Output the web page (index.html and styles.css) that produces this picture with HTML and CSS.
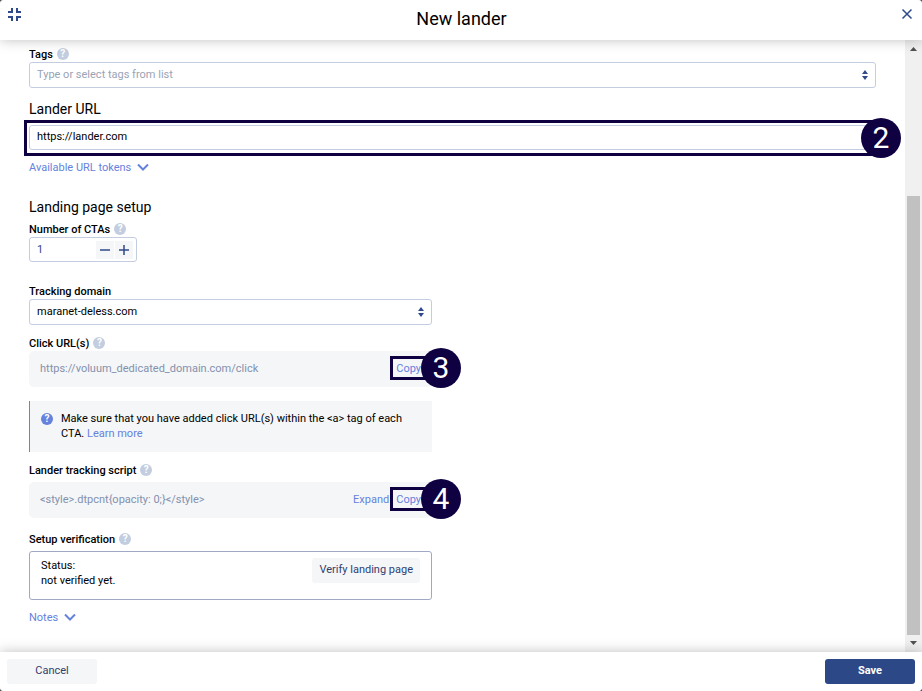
FILE: index.html
```html
<!DOCTYPE html>
<html lang="en">
<head>
    <meta charset="UTF-8">
    <meta name="viewport" content="width=device-width, initial-scale=1.0">
    <title>New lander</title>
    <link rel="stylesheet" href="styles.css">
</head>
<body>
    <div class="dialog">
        <header class="dialog-header">
            <button class="icon-button" type="button" aria-label="Collapse">
                <svg width="14" height="14" viewBox="0 0 14 14"><path d="M0 4H4V0M9 0V4H13M0 9H4V13M13 9H9V13" fill="none" stroke="#2f4a8a" stroke-width="2"/></svg>
            </button>
            <h1>New lander</h1>
            <button class="icon-button" type="button" aria-label="Close">
                <svg width="12" height="12" viewBox="0 0 12 12"><path d="M1.500 1.500L10.500 10.500M10.500 1.500L1.500 10.500" fill="none" stroke="#2f4a8a" stroke-width="1.500"/></svg>
            </button>
        </header>

        <div class="dialog-body">
            <form class="form" id="lander-form">
                <div class="label-row">
                    <label for="tags">Tags</label>
                    <span class="help">?</span>
                </div>
                <div class="field">
                    <input class="control" type="text" id="tags" placeholder="Type or select tags from list">
                    <svg class="arrows" width="6" height="10" viewBox="0 0 6 10"><path d="M0 4L3 0L6 4ZM0 6H6L3 10Z" fill="#2f4a8a"/></svg>
                </div>

                <h2><label for="lander-url">Lander URL</label></h2>
                <div class="field url-field">
                    <input class="control" type="text" id="lander-url" value="https://lander.com">
                    <span class="marker"></span>
                    <span class="step">2</span>
                </div>
                <button class="toggle" type="button">Available URL tokens
                    <svg width="12" height="8" viewBox="0 0 12 8"><path d="M1 1.500L6 6.500L11 1.500" fill="none" stroke="#6582dd" stroke-width="2"/></svg>
                </button>

                <h2 class="setup-title">Landing page setup</h2>
                <div class="label-row">
                    <label for="ctas">Number of CTAs</label>
                    <span class="help">?</span>
                </div>
                <div class="stepper">
                    <input type="text" inputmode="numeric" id="ctas" value="1">
                    <button type="button" aria-label="Decrease">
                        <svg width="10" height="10" viewBox="0 0 10 10"><path d="M0 5H10" stroke="#2f4a8a" stroke-width="1.500"/></svg>
                    </button>
                    <button type="button" aria-label="Increase">
                        <svg width="10" height="10" viewBox="0 0 10 10"><path d="M0 5H10M5 0V10" stroke="#2f4a8a" stroke-width="1.500"/></svg>
                    </button>
                </div>

                <div class="narrow">
                    <div class="label-row domain-label">
                        <label for="domain">Tracking domain</label>
                    </div>
                    <div class="field">
                        <select class="control" id="domain">
                            <option>maranet-deless.com</option>
                        </select>
                        <svg class="arrows" width="6" height="10" viewBox="0 0 6 10"><path d="M0 4L3 0L6 4ZM0 6H6L3 10Z" fill="#2f4a8a"/></svg>
                    </div>

                    <div class="label-row click-label">
                        <span>Click URL(s)</span>
                        <span class="help">?</span>
                    </div>
                    <div class="code-box">
                        <span class="code">https://voluum_dedicated_domain.com/click</span>
                        <button class="text-button" type="button">Copy</button>
                        <span class="marker"></span>
                        <span class="step">3</span>
                    </div>

                    <div class="info">
                        <span class="help">?</span>
                        <p>Make sure that you have added click URL(s) within the &lt;a&gt; tag of each CTA. <a href="#">Learn more</a></p>
                    </div>

                    <div class="label-row script-label">
                        <span>Lander tracking script</span>
                        <span class="help">?</span>
                    </div>
                    <div class="code-box">
                        <span class="code">&lt;style&gt;.dtpcnt{opacity: 0;}&lt;/style&gt;</span>
                        <button class="text-button" type="button">Expand</button>
                        <button class="text-button" type="button">Copy</button>
                        <span class="marker"></span>
                        <span class="step">4</span>
                    </div>

                    <div class="label-row verify-label">
                        <span>Setup verification</span>
                        <span class="help">?</span>
                    </div>
                    <div class="verify">
                        <p>Status:<br>not verified yet.</p>
                        <button class="button" type="button">Verify landing page</button>
                    </div>
                    <button class="toggle" type="button">Notes
                        <svg width="12" height="8" viewBox="0 0 12 8"><path d="M1 1.500L6 6.500L11 1.500" fill="none" stroke="#6582dd" stroke-width="2"/></svg>
                    </button>
                </div>
            </form>

            <div class="scrollbar">
                <svg width="7" height="4" viewBox="0 0 7 4"><path d="M0 4L3.500 0L7 4Z" fill="#505050"/></svg>
                <div class="track"><div class="thumb"></div></div>
                <svg width="7" height="4" viewBox="0 0 7 4"><path d="M0 0H7L3.500 4Z" fill="#505050"/></svg>
            </div>
        </div>

        <footer class="dialog-footer">
            <button class="button" type="button">Cancel</button>
            <button class="button primary" type="submit" form="lander-form">Save</button>
        </footer>
    </div>
</body>
</html>
```
FILE: styles.css
```css
* {
    box-sizing: border-box;
}

body {
    margin: 0;
    background: #555;
    color: #000;
    font-family: Roboto, "Liberation Sans", sans-serif;
    font-size: 11px;
    line-height: 15px;
}

h1, h2, p {
    margin: 0;
}

button, input, select {
    margin: 0;
    padding: 0;
    border: none;
    background: none;
    color: inherit;
    font: inherit;
}

button {
    cursor: pointer;
}

a {
    color: #6582dd;
    text-decoration: none;
}

svg {
    display: block;
    flex: none;
}

.dialog {
    display: flex;
    flex-direction: column;
    min-height: 100vh;
    background: #fff;
    border-radius: 4px;
    overflow: hidden;
}

/* header and footer */
.dialog-header {
    position: relative;
    z-index: 1;
    display: flex;
    align-items: flex-start;
    justify-content: space-between;
    height: 40px;
    padding: 8px 9px 0 8px;
    box-shadow: 0 0 12px rgba(0, 0, 0, 0.25);
    background: #fff;
}

h1 {
    font-size: 18px;
    font-weight: 400;
    line-height: 22px;
}

.icon-button {
    display: flex;
}

.dialog-footer {
    position: relative;
    z-index: 1;
    display: flex;
    justify-content: space-between;
    padding: 7px;
    background: #fff;
    box-shadow: 0 0 12px rgba(0, 0, 0, 0.25);
}

.button {
    height: 25px;
    padding: 0 7px 2px;
    border-radius: 3px;
    background: #f5f6f8;
    color: #2f4070;
}

.dialog-footer .button {
    width: 90px;
}

.dialog-footer .primary {
    background: #2d4887;
    color: #fff;
    font-weight: 700;
}

/* form */
.dialog-body {
    flex: 1;
    display: flex;
}

.form {
    flex: 1;
    padding: 6px 29px 27px;
}

h2 {
    margin: 11px 0 6px;
    font-size: 14px;
    font-weight: 400;
    line-height: 20px;
}

.setup-title {
    margin: 22px 0 4px;
}

.narrow {
    max-width: 403px;
}

.label-row {
    display: flex;
    align-items: center;
    gap: 4px;
    height: 16px;
    font-weight: 500;
}

.help {
    width: 12px;
    height: 12px;
    border-radius: 50%;
    background: #c2cddf;
    color: #fff;
    font-size: 10px;
    font-weight: 700;
    line-height: 12px;
    text-align: center;
}

.field {
    position: relative;
}

.control {
    display: block;
    width: 100%;
    height: 26px;
    padding: 0 7px 2px;
    border: 1px solid #c2cddf;
    border-radius: 3px;
    appearance: none;
}

.control::placeholder {
    color: #9aa3b5;
}

.arrows {
    position: absolute;
    top: 8px;
    right: 8px;
    pointer-events: none;
}

.toggle {
    display: flex;
    align-items: center;
    gap: 6px;
    height: 16px;
    margin-top: 9px;
    color: #6582dd;
}

.stepper {
    display: flex;
    align-items: center;
    gap: 1px;
    width: 108px;
    height: 25px;
    padding: 0 3px 0 7px;
    border: 1px solid #c2cddf;
    border-radius: 3px;
}

.stepper input {
    flex: 1;
    min-width: 0;
    color: #2f4a8a;
}

.stepper button {
    display: flex;
    align-items: center;
    justify-content: center;
    width: 18px;
    height: 18px;
    background: #f5f6f8;
}

.domain-label {
    margin-top: 21px;
}

.click-label, .script-label {
    margin-top: 10px;
}

.script-label, .verify-label {
    margin-bottom: 4px;
}

.verify-label {
    margin-top: 13px;
}

.code-box {
    position: relative;
    display: flex;
    align-items: center;
    gap: 7px;
    height: 36px;
    padding: 0 11px 2px;
    border-radius: 5px;
    background: #f5f6f8;
}

.code {
    flex: 1;
    color: #8391ad;
}

.text-button {
    color: #6582dd;
}

.info {
    display: flex;
    gap: 8px;
    margin-top: 14px;
    padding: 10px 11px;
    min-height: 51px;
    border-left: 1px solid #6582dd;
    background: #f5f6f8;
}

.info .help {
    flex: none;
    margin-top: 2px;
    background: #6582dd;
}

.verify {
    display: flex;
    justify-content: space-between;
    align-items: flex-start;
    padding: 6px 11px 11px;
    border: 1px solid #9fa9c4;
    border-radius: 3px;
}

/* numbered steps over the form */
.marker {
    position: absolute;
    top: 5px;
    right: 0;
    width: 42px;
    height: 24px;
    border: 3px solid #0f0041;
}

.step {
    position: absolute;
    top: -3px;
    right: -29px;
    width: 40px;
    height: 40px;
    border-radius: 50%;
    background: #0f0041;
    color: #fff;
    font-size: 30px;
    line-height: 40px;
    text-align: center;
}

.url-field .control {
    height: 25px;
}

.url-field .marker {
    top: -5px;
    right: 0;
    left: -5px;
    width: auto;
    height: 36px;
}

.url-field .step {
    top: -7px;
    right: -25px;
}

/* scrollbar */
.scrollbar {
    display: flex;
    flex-direction: column;
    align-items: center;
    width: 17px;
    padding: 7px 0;
    background: #f0f0f0;
}

.track {
    flex: 1;
    display: flex;
    align-items: flex-end;
    width: 13px;
    padding: 6px 0;
}

.thumb {
    width: 100%;
    height: 76%;
    background: #c1c1c1;
}
```
